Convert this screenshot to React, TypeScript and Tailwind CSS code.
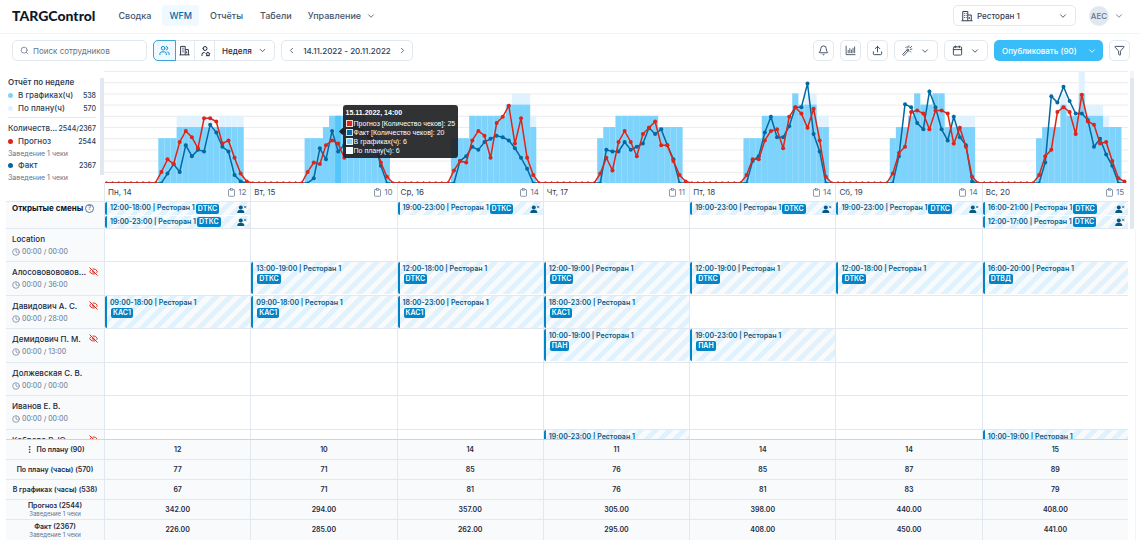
import { ReactNode } from "react";
import {
  Bell,
  Calendar,
  ChevronDown,
  ChevronLeft,
  ChevronRight,
  Clipboard,
  Clock,
  EllipsisVertical,
  EyeOff,
  Filter,
  Search,
  Upload,
  Users,
} from "lucide-react";
import { TbUserStar } from "react-icons/tb";

interface DayStats {
  label: string;
  open: number;
  // hourly values starting at 09:00
  scheduled: number[];
  planned: number[];
  forecast: number[];
  fact: number[];
}

interface Shift {
  time: string;
  tag: string;
}

interface Employee {
  name: string;
  hours: string;
  hidden?: boolean;
  shifts: Record<number, Shift>;
}

const FIRST_HOUR = 9;

const days: DayStats[] = [
  {
    label: "Пн, 14",
    open: 12,
    scheduled: [4, 4, 4, 5, 5, 5, 5, 5, 5, 5, 5, 5, 5, 5],
    planned: [4, 4, 4, 6, 6, 6, 6, 6, 6, 5, 6, 6, 6, 6],
    forecast: [7, 15, 12, 26, 33, 29, 22, 41, 41, 39, 25, 27, 16, 6, 1],
    fact: [0, 6, 12, 7, 24, 17, 21, 20, 37, 32, 23, 20, 5, 1, 0],
  },
  {
    label: "Вт, 15",
    open: 10,
    scheduled: [4, 4, 4, 5, 6, 6, 6, 6, 6, 6, 5, 5, 4, 4],
    planned: [4, 4, 4, 5, 6, 6, 6, 6, 6, 6, 5, 5, 4, 4],
    forecast: [7, 13, 12, 24, 27, 25, 16, 30, 34, 33, 30, 26, 13, 4, 0],
    fact: [0, 3, 22, 15, 33, 20, 24, 34, 36, 33, 29, 25, 11, 0, 0],
  },
  {
    label: "Ср, 16",
    open: 14,
    scheduled: [4, 4, 4, 6, 6, 6, 6, 6, 6, 7, 7, 7, 7, 5],
    planned: [4, 4, 4, 6, 6, 6, 6, 6, 6, 7, 8, 8, 8, 6],
    forecast: [8, 14, 13, 27, 33, 30, 16, 38, 42, 49, 25, 41, 16, 5, 0],
    fact: [0, 14, 17, 23, 21, 26, 28, 30, 29, 27, 22, 16, 9, 0, 0],
  },
  {
    label: "Чт, 17",
    open: 11,
    scheduled: [4, 5, 5, 6, 6, 6, 6, 6, 6, 6, 5, 5, 5, 5],
    planned: [4, 5, 5, 6, 6, 6, 6, 6, 6, 6, 5, 5, 5, 5],
    forecast: [6, 16, 8, 26, 33, 26, 17, 31, 35, 39, 24, 24, 14, 5, 1],
    fact: [0, 21, 20, 20, 26, 21, 23, 25, 35, 31, 34, 24, 15, 0, 0],
  },
  {
    label: "Пт, 18",
    open: 14,
    scheduled: [4, 4, 4, 6, 6, 6, 6, 6, 8, 7, 7, 7, 5, 5],
    planned: [4, 4, 4, 6, 6, 6, 6, 6, 8, 7, 8, 8, 6, 6],
    forecast: [5, 15, 15, 27, 33, 34, 22, 42, 48, 44, 35, 47, 27, 4, 0],
    fact: [0, 14, 17, 32, 42, 29, 29, 36, 48, 48, 63, 31, 20, 0, 0],
  },
  {
    label: "Сб, 19",
    open: 14,
    scheduled: [4, 5, 5, 6, 8, 7, 7, 8, 8, 5, 5, 5, 5, 5],
    planned: [4, 5, 5, 6, 8, 7, 7, 8, 8, 5, 6, 6, 6, 6],
    forecast: [6, 19, 23, 45, 46, 44, 34, 46, 46, 44, 25, 35, 23, 4, 0],
    fact: [0, 17, 50, 48, 38, 34, 58, 48, 34, 27, 42, 29, 24, 1, 0],
  },
  {
    label: "Вс, 20",
    open: 15,
    scheduled: [4, 5, 5, 5, 7, 6, 6, 8, 6, 6, 6, 5, 5, 5],
    planned: [4, 5, 5, 5, 8, 7, 6, 10, 7, 7, 7, 6, 5, 5],
    forecast: [5, 17, 21, 45, 48, 45, 31, 56, 39, 37, 25, 26, 14, 3, 1],
    fact: [0, 13, 55, 51, 61, 52, 44, 44, 40, 23, 28, 18, 11, 0, 0],
  },
];

const openShifts: Record<number, Shift[]> = {
  0: [
    { time: "12:00-18:00", tag: "DТКС" },
    { time: "19:00-23:00", tag: "DТКС" },
  ],
  2: [{ time: "19:00-23:00", tag: "DТКС" }],
  4: [{ time: "19:00-23:00", tag: "DТКС" }],
  5: [{ time: "19:00-23:00", tag: "DТКС" }],
  6: [
    { time: "16:00-21:00", tag: "DТКС" },
    { time: "12:00-17:00", tag: "DТКС" },
  ],
};

const employees: Employee[] = [
  { name: "Location", hours: "00:00 / 00:00", shifts: {} },
  {
    name: "Алосововововововов",
    hours: "00:00 / 36:00",
    hidden: true,
    shifts: {
      1: { time: "13:00-19:00", tag: "DТКС" },
      2: { time: "12:00-18:00", tag: "DТКС" },
      3: { time: "12:00-19:00", tag: "DТКС" },
      4: { time: "12:00-19:00", tag: "DТКС" },
      5: { time: "12:00-18:00", tag: "DТКС" },
      6: { time: "16:00-20:00", tag: "DТВД" },
    },
  },
  {
    name: "Давидович А. С.",
    hours: "00:00 / 28:00",
    hidden: true,
    shifts: {
      0: { time: "09:00-18:00", tag: "КАС1" },
      1: { time: "09:00-18:00", tag: "КАС1" },
      2: { time: "18:00-23:00", tag: "КАС1" },
      3: { time: "18:00-23:00", tag: "КАС1" },
    },
  },
  {
    name: "Демидович П. М.",
    hours: "00:00 / 13:00",
    hidden: true,
    shifts: {
      3: { time: "10:00-19:00", tag: "ПАН" },
      4: { time: "19:00-23:00", tag: "ПАН" },
    },
  },
  { name: "Должевская С. В.", hours: "00:00 / 00:00", shifts: {} },
  { name: "Иванов Е. В.", hours: "00:00 / 00:00", shifts: {} },
  {
    name: "Кобрера Р. Ю.",
    hours: "00:00 / 13:00",
    hidden: true,
    shifts: {
      3: { time: "19:00-23:00", tag: "ПАН" },
      6: { time: "10:00-19:00", tag: "ПАН" },
    },
  },
];

const totals = [
  { title: "По плану (90)", values: ["12", "10", "14", "11", "14", "14", "15"] },
  { title: "По плану (часы) (570)", values: ["77", "71", "85", "76", "85", "87", "89"] },
  { title: "В графиках (часы) (538)", values: ["67", "71", "81", "76", "81", "83", "79"] },
  {
    title: "Прогноз (2544)",
    note: "Заведение 1 чеки",
    values: ["342.00", "294.00", "357.00", "305.00", "398.00", "440.00", "408.00"],
  },
  {
    title: "Факт (2367)",
    note: "Заведение 1 чеки",
    values: ["226.00", "285.00", "262.00", "295.00", "408.00", "450.00", "441.00"],
  },
];

function BuildingIcon({ className }: { className?: string }) {
  return (
    <svg viewBox="0 0 24 24" fill="none" stroke="currentColor" strokeWidth="2" className={className}>
      <path d="M1 21.500h22M3.500 21.500V3h10v18.500M13.500 10h7v11.500" />
      <path d="M6.500 7h1.500M9.500 7H11M6.500 11h1.500M9.500 11H11M6.500 15h1.500M9.500 15H11M16.500 14v4" />
    </svg>
  );
}

function BarsIcon({ className }: { className?: string }) {
  return (
    <svg viewBox="0 0 24 24" fill="none" stroke="currentColor" strokeWidth="1.8" strokeLinecap="round" className={className}>
      <path d="M2.500 2.500v18.500h19.500" />
      <path d="M7 12v5M10.500 8v9M14 11v6M17.500 7v10M21 4v13" />
    </svg>
  );
}

function WandIcon({ className }: { className?: string }) {
  return (
    <svg viewBox="0 0 24 24" fill="none" stroke="currentColor" strokeWidth="1.8" strokeLinecap="round" className={className}>
      <path d="M2 20l11-11.500 2.500 2.500L4.500 22.500zM10.500 11l2.500 2.500" strokeLinejoin="round" />
      <path d="M15 5V2M9.500 6.500L8 5M18.500 9.500l3-.5M18 6l3-3M17.500 14l1.500 1.500M12 5l-.5-1.500" />
    </svg>
  );
}

function UserRemoveIcon() {
  return (
    <svg viewBox="0 0 24 20" className="h-2 w-[10px] shrink-0 text-[#075985]">
      <g fill="currentColor">
        <circle cx="9" cy="6" r="5" />
        <path d="M0 20c0-6 3-8 9-8s9 2 9 8z" />
      </g>
      <path d="M17 2l6 6M23 2l-6 6" stroke="currentColor" strokeWidth="1.8" />
    </svg>
  );
}

function ToolButton({ label, children }: { label: string; children: ReactNode }) {
  return (
    <button
      aria-label={label}
      className="flex h-[21px] min-w-[21px] items-center justify-center rounded-[5px] border border-slate-200 bg-white text-slate-700"
    >
      {children}
    </button>
  );
}

function Header() {
  return (
    <header className="flex h-[34px] shrink-0 items-center border-b border-slate-100 pr-4 pb-[2px] pl-3">
      <a href="#" className="font-[Lato,sans-serif] text-[14px] font-black text-slate-900">
        TARGControl
      </a>
      <nav className="ml-[15px] flex flex-auto items-center text-[9px] font-medium text-slate-600">
        <a href="#" className="px-2 py-1">Сводка</a>
        <a href="#" className="ml-[3px] rounded bg-sky-50 px-[7px] py-1 text-[#0369a1]">WFM</a>
        <a href="#" className="ml-[3px] px-2 py-1">Отчёты</a>
        <a href="#" className="ml-px px-2 py-1">Табели</a>
        <button className="flex items-center gap-[5px] px-2 py-1">
          Управление
          <ChevronDown className="size-[10px]" />
        </button>
      </nav>
      <label className="flex h-[21px] w-[123px] items-center rounded-[5px] border border-slate-200 px-[7px] text-slate-700">
        <BuildingIcon className="size-3 shrink-0" />
        <select
          aria-label="Заведение"
          className="ml-1 min-w-0 flex-auto appearance-none text-[8px] font-medium outline-none"
        >
          <option>Ресторан 1</option>
        </select>
        <ChevronDown className="size-[10px] shrink-0" />
      </label>
      <button className="ml-[13px] flex items-center gap-[5px] text-slate-500">
        <span className="flex size-5 items-center justify-center rounded-full bg-slate-200 text-[8px] font-medium">
          АЕС
        </span>
        <ChevronDown className="size-[10px]" />
      </button>
    </header>
  );
}

function Toolbar() {
  return (
    <div className="flex h-[37px] shrink-0 items-start gap-[6px] pt-[6px] pr-[10px] pl-3">
      <label className="flex h-[21px] w-[135px] items-center rounded-[5px] border border-slate-200 px-[7px] text-slate-500">
        <Search className="size-[9px] shrink-0" />
        <input
          type="search"
          aria-label="Поиск сотрудников"
          placeholder="Поиск сотрудников"
          className="ml-1 min-w-0 flex-auto text-[8px] outline-none placeholder:text-slate-500"
        />
      </label>
      <div className="flex h-[21px] rounded-[5px] border border-slate-200 text-slate-800">
        <button
          aria-label="Сотрудники"
          className="-m-px flex w-[23px] items-center justify-center rounded-l-[5px] border border-[#38a5d8] bg-sky-50 text-[#0284c7]"
        >
          <Users className="size-[11px]" />
        </button>
        <button aria-label="Заведения" className="flex w-5 items-center justify-center border-r border-slate-200">
          <BuildingIcon className="size-[11px]" />
        </button>
        <button aria-label="Должности" className="flex w-5 items-center justify-center border-r border-slate-200">
          <TbUserStar className="size-3" />
        </button>
        <label className="flex w-[59px] items-center px-[7px]">
          <select aria-label="Период" className="min-w-0 flex-auto appearance-none text-[8px] font-medium outline-none">
            <option>Неделя</option>
          </select>
          <ChevronDown className="size-[9px] shrink-0" />
        </label>
      </div>
      <div className="flex h-[21px] w-[132px] items-center justify-between rounded-[5px] border border-slate-200 px-[5px] text-[8px] font-medium text-slate-700">
        <button aria-label="Предыдущая неделя">
          <ChevronLeft className="size-[9px]" />
        </button>
        <span>14.11.2022 - 20.11.2022</span>
        <button aria-label="Следующая неделя">
          <ChevronRight className="size-[9px]" />
        </button>
      </div>
      <div className="ml-auto flex gap-[6px]">
        <ToolButton label="Уведомления">
          <Bell className="size-[11px]" />
        </ToolButton>
        <ToolButton label="Отчёт">
          <BarsIcon className="size-[11px]" />
        </ToolButton>
        <ToolButton label="Выгрузить">
          <Upload className="size-[11px]" />
        </ToolButton>
        <ToolButton label="Автозаполнение">
          <span className="flex items-center gap-[7px] px-[7px]">
            <WandIcon className="size-[11px]" />
            <ChevronDown className="size-[10px]" />
          </span>
        </ToolButton>
        <ToolButton label="Календарь">
          <span className="flex items-center gap-[7px] px-[7px]">
            <Calendar className="size-[11px]" />
            <ChevronDown className="size-[10px]" />
          </span>
        </ToolButton>
        <button className="flex h-[21px] w-[109px] items-center justify-between rounded-[5px] bg-[#38bdf8] pr-[6px] pl-2 text-[8px] font-medium text-white">
          Опубликовать (90)
          <ChevronDown className="size-[10px]" />
        </button>
        <ToolButton label="Фильтр">
          <Filter className="size-[11px]" />
        </ToolButton>
      </div>
    </div>
  );
}

function LegendRow({ dot, name, value }: { dot: string; name: string; value: string }) {
  return (
    <div className="flex items-center leading-[13px]">
      <span className={`mr-[5px] size-[5px] rounded-full ${dot}`} />
      <span className="flex-auto">{name}</span>
      <span className="text-[7px]">{value}</span>
    </div>
  );
}

function Legend() {
  return (
    <div className="flex h-28 w-[98px] shrink-0 justify-between pl-[2px]">
      <div className="w-[88px] pt-1 text-[8px] font-medium text-slate-700">
        <div className="text-[8px] leading-[14px] font-semibold">Отчёт по неделе</div>
        <LegendRow dot="bg-[#7dd3fc]" name="В графиках(ч)" value="538" />
        <LegendRow dot="bg-[#e0f2fe]" name="По плану(ч)" value="570" />
        <div className="mt-[2px] flex items-center justify-between border-t border-slate-200 pt-1 leading-[13px]">
          <span>Количеств...</span>
          <span className="text-[7px]">2544/2367</span>
        </div>
        <LegendRow dot="bg-[#dc2618]" name="Прогноз" value="2544" />
        <div className="text-[7px] leading-[11px] font-normal text-slate-500">Заведение 1 чеки</div>
        <LegendRow dot="bg-[#0369a1]" name="Факт" value="2367" />
        <div className="text-[7px] leading-[11px] font-normal text-slate-500">Заведение 1 чеки</div>
      </div>
      <div className="mt-[7px] mb-2 w-1 bg-slate-200" />
    </div>
  );
}

const CHART_W = 1024;
const CHART_H = 112;
const HOUR = CHART_W / 168;
const MAX_COUNT = 71;

function hourly(key: "forecast" | "fact") {
  return days.flatMap((day, d) =>
    Array.from({ length: 24 }, (_, h) => {
      const value = day[key][h - FIRST_HOUR] ?? 0;
      return {
        x: (d * 24 + h + 0.5) * HOUR - 0.5,
        y: CHART_H - (value / MAX_COUNT) * CHART_H,
        value,
      };
    })
  );
}

function Bars({ values, day, fill }: { values: number[]; day: number; fill: string }) {
  return (
    <g fill={fill}>
      {values.map((v, i) => (
        <rect
          key={i}
          x={(day * 24 + FIRST_HOUR + i) * HOUR - 0.5}
          y={CHART_H - v * 11.2}
          width={HOUR}
          height={v * 11.2}
        />
      ))}
    </g>
  );
}

function Series({ name, color }: { name: "forecast" | "fact"; color: string }) {
  const points = hourly(name);
  return (
    <g fill={color}>
      <polyline
        points={points.map((p) => `${p.x},${p.y}`).join(" ")}
        fill="none"
        stroke={color}
        strokeWidth="1.5"
      />
      {points.map((p, i) => (
        <circle key={i} cx={p.x} cy={p.y} r={p.value > 0 ? 2 : 1.5} />
      ))}
    </g>
  );
}

function TooltipRow({ color, text }: { color: string; text: string }) {
  return (
    <div className="flex items-center gap-px">
      <span className={`size-[7px] border border-white/80 ${color}`} />
      {text}
    </div>
  );
}

function WeekChart() {
  return (
    <div className="relative min-w-0 flex-auto">
      <svg
        viewBox={`0 0 ${CHART_W} ${CHART_H}`}
        preserveAspectRatio="none"
        className="block h-28 w-full overflow-hidden"
      >
        {Array.from({ length: 10 }, (_, i) => (
          <line key={i} x1="0" x2={CHART_W} y1={i * 11.2 + 0.5} y2={i * 11.2 + 0.5} stroke="#ececef" />
        ))}
        {days.map((day, d) => (
          <g key={day.label}>
            <Bars values={day.planned} day={d} fill="#e0f2fe" />
            <Bars values={day.scheduled} day={d} fill="#7dd3fc" />
          </g>
        ))}
        <rect x={(24 + 14) * HOUR - 0.5} y={CHART_H - 67.2} width={HOUR} height="67.2" fill="#56c5fa" />
        <Series name="fact" color="#0369a1" />
        <Series name="forecast" color="#dc2618" />
      </svg>
      <div className="absolute top-[34px] left-[23.3%] rounded-[3px] bg-[#202225]/93 px-[3px] py-[3px] font-['Liberation_Sans',sans-serif] text-[7px] leading-[9px] whitespace-nowrap text-white">
        <div className="absolute top-[24px] -left-[3px] size-[5px] rotate-45 bg-[#202225]" />
        <div className="pb-[2px] font-bold">15.11.2022, 14:00</div>
        <TooltipRow color="bg-[#dc2618]" text="Прогноз [Количество чеков]: 25" />
        <TooltipRow color="bg-[#0369a1]" text="Факт [Количество чеков]: 20" />
        <TooltipRow color="bg-[#7dd3fc]" text="В графиках(ч): 6" />
        <TooltipRow color="bg-sky-50" text="По плану(ч): 6" />
      </div>
    </div>
  );
}

function Columns() {
  return (
    <colgroup>
      <col className="w-[98px]" />
      {days.map((day) => (
        <col key={day.label} />
      ))}
    </colgroup>
  );
}

const stripes =
  "bg-[repeating-linear-gradient(135deg,#f8fafc_0_5px,#e0f2fe_5px_10px)] border-l-2 border-[#0284c7] rounded-l-[2px]";

function Tag({ children }: { children: ReactNode }) {
  return (
    <span className="inline-block rounded-[2px] bg-[#0284c7] px-[2px] text-[7px] leading-[10px] font-semibold text-white">
      {children}
    </span>
  );
}

function ScheduleHead() {
  return (
    <table className="w-full table-fixed border-separate border-spacing-0">
      <Columns />
      <thead>
        <tr className="h-[18px]">
          <td />
          {days.map((day) => (
            <th key={day.label} className="border-l border-slate-200 p-0 font-normal">
              <div className="flex items-center justify-between pr-1 pl-[3px] text-[8px] text-slate-700">
                {day.label}
                <span className="flex items-center gap-[2px] text-slate-500">
                  <Clipboard className="size-[9px]" />
                  {day.open}
                </span>
              </div>
            </th>
          ))}
        </tr>
      </thead>
      <tbody>
        <tr className="h-7">
          <th className="border-t border-b border-slate-200 bg-slate-50 p-0 pl-[6px] align-top">
            <div className="flex items-center gap-[2px] text-[8px] leading-3 font-bold text-slate-900">
              Открытые смены
              <span className="flex size-[9px] items-center justify-center rounded-full border border-slate-500 text-[6px] font-normal text-slate-600">
                ?
              </span>
            </div>
          </th>
          {days.map((day, d) => (
            <td key={day.label} className="border-t border-b border-l border-slate-200 p-0 align-top">
              <div className="flex flex-col gap-px">
                {(openShifts[d] ?? []).map((shift) => (
                  <div
                    key={shift.time}
                    className={`flex h-[13px] items-center pr-[3px] pl-[3px] text-[7px] font-semibold whitespace-nowrap text-[#075985] last:not-first:h-3 ${stripes}`}
                  >
                    <span className="mr-px">{shift.time} | Ресторан 1</span>
                    <Tag>{shift.tag}</Tag>
                    <span className="ml-auto">
                      <UserRemoveIcon />
                    </span>
                  </div>
                ))}
              </div>
            </td>
          ))}
        </tr>
      </tbody>
    </table>
  );
}

function ScheduleRows() {
  return (
    <table className="w-full table-fixed border-separate border-spacing-0">
      <Columns />
      <tbody>
        {employees.map((employee) => (
          <tr key={employee.name} className="h-[33px] even:h-[34px]">
            <th className="border-b border-slate-200 bg-slate-50 p-0 pr-[6px] pl-[6px] text-left">
              <div className="flex items-center justify-between text-[8px] leading-[13px] font-medium text-slate-800">
                <span className="truncate">{employee.name}</span>
                {employee.hidden && (
                  <EyeOff strokeWidth={2.5} className="mb-[2px] size-[9px] shrink-0 text-[#dc2618]" />
                )}
              </div>
              <div className="flex items-center gap-[2px] text-[7px] leading-3 font-normal text-slate-500">
                <Clock className="size-2" />
                {employee.hours}
              </div>
            </th>
            {days.map((day, d) => {
              const shift = employee.shifts[d];
              return (
                <td key={day.label} className="border-b border-l border-slate-200 p-0 align-top">
                  {shift && (
                    <div className={`h-8 pt-[2px] pl-[3px] text-[7px] font-semibold text-[#075985] ${stripes}`}>
                      <div className="leading-[10px]">{shift.time} | Ресторан 1</div>
                      <div className="flex pl-px">
                        <Tag>{shift.tag}</Tag>
                      </div>
                    </div>
                  )}
                </td>
              );
            })}
          </tr>
        ))}
      </tbody>
    </table>
  );
}

function Totals() {
  return (
    <table className="w-full table-fixed border-separate border-spacing-0 border-t border-slate-300 bg-slate-50 text-slate-800">
      <Columns />
      <tbody>
        {totals.map((row, i) => (
          <tr key={row.title} className="group h-5">
            <th className="border-b border-slate-200 p-0 text-center text-[7px] font-semibold group-last:border-b-0">
              <div className="flex items-center justify-center gap-[2px] leading-[9px]">
                {i === 0 && <EllipsisVertical className="size-[9px]" />}
                {row.title}
              </div>
              {row.note && <div className="text-[6px] leading-[8px] font-normal text-slate-500">{row.note}</div>}
            </th>
            {row.values.map((value, d) => (
              <td
                key={d}
                className="border-b border-l border-slate-200 p-0 text-center text-[7px] leading-[10px] font-semibold group-last:border-b-0"
              >
                {value}
              </td>
            ))}
          </tr>
        ))}
      </tbody>
    </table>
  );
}

export default function App() {
  return (
    <div className="flex h-screen flex-col overflow-hidden bg-white pb-[5px] font-[Inter,sans-serif] text-slate-800">
      <Header />
      <Toolbar />
      <main className="flex min-h-0 flex-auto flex-col pl-[6px]">
        <div className="flex shrink-0">
          <div className="min-w-0 flex-auto">
            <div className="flex">
              <Legend />
              <WeekChart />
            </div>
            <ScheduleHead />
          </div>
          <div className="mr-[6px] ml-[2px] w-1 shrink-0 bg-slate-100 pt-[7px]">
            <div className="h-full bg-slate-200" />
          </div>
        </div>
        <div className="mr-1 flex min-h-0 flex-auto flex-col border-r border-slate-100 pr-[7px]">
          <div className="min-h-0 flex-auto basis-0 overflow-hidden">
            <ScheduleRows />
          </div>
          <Totals />
        </div>
      </main>
    </div>
  );
}
